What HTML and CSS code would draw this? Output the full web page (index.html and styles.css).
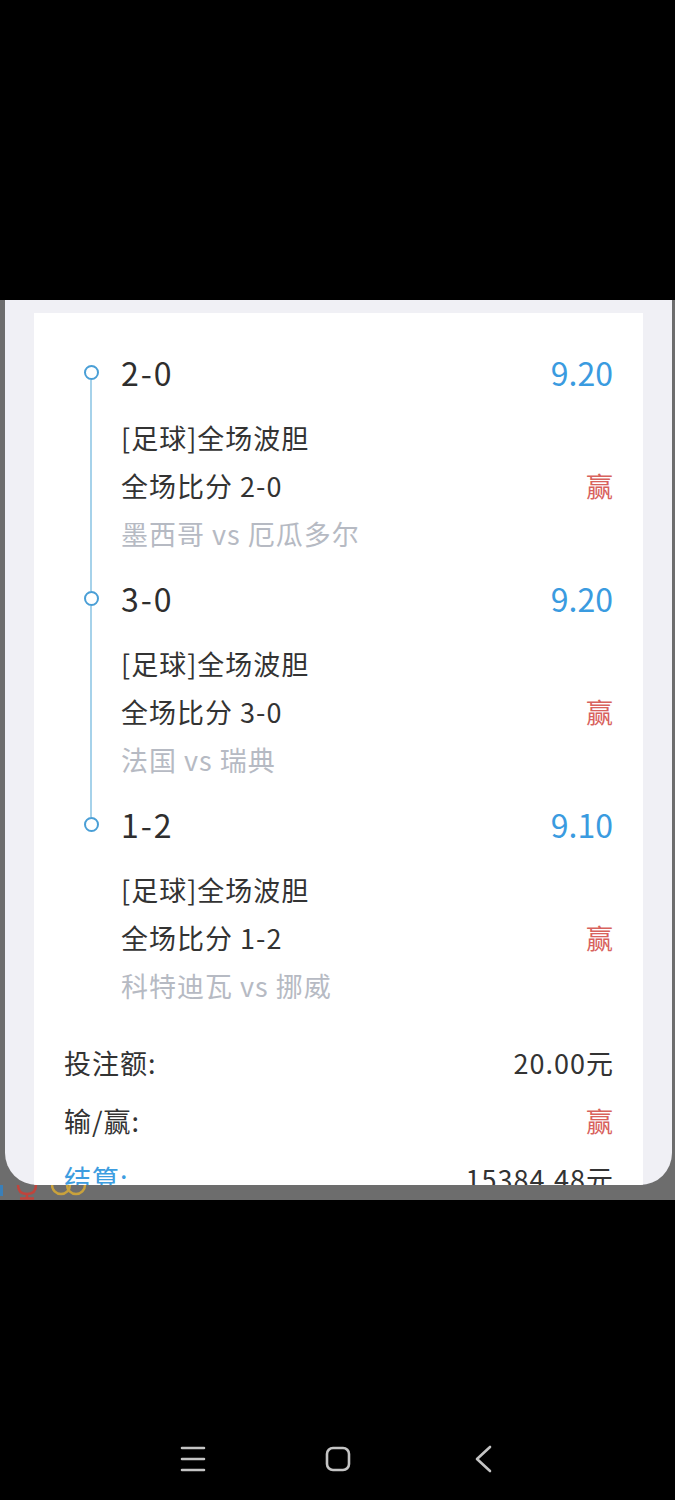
FILE: index.html
```html
<!DOCTYPE html>
<html lang="zh-CN">
<head>
    <meta charset="UTF-8">
    <meta name="viewport" content="width=device-width, initial-scale=1.0">
    <title>注单详情</title>
    <link rel="stylesheet" href="styles.css">
</head>
<body>

    <div class="top-black"></div>

    <div class="screen">
        <div class="modal">
            <div class="card">

                <div class="bet">
                    <div class="rail first">
                        <span class="seg-top"></span>
                        <span class="dot"></span>
                        <span class="seg-bot"></span>
                    </div>
                    <div class="bet-body">
                        <div class="bet-head">
                            <span class="score">2-0</span>
                            <span class="odds">9.20</span>
                        </div>
                        <div class="line">[足球]全场波胆</div>
                        <div class="line row">
                            <span>全场比分 2-0</span>
                            <span class="win end">赢</span>
                        </div>
                        <div class="line teams">墨西哥 vs 厄瓜多尔</div>
                    </div>
                </div>

                <div class="bet">
                    <div class="rail">
                        <span class="seg-top"></span>
                        <span class="dot"></span>
                        <span class="seg-bot"></span>
                    </div>
                    <div class="bet-body">
                        <div class="bet-head">
                            <span class="score">3-0</span>
                            <span class="odds">9.20</span>
                        </div>
                        <div class="line">[足球]全场波胆</div>
                        <div class="line row">
                            <span>全场比分 3-0</span>
                            <span class="win end">赢</span>
                        </div>
                        <div class="line teams">法国 vs 瑞典</div>
                    </div>
                </div>

                <div class="bet">
                    <div class="rail last">
                        <span class="seg-top"></span>
                        <span class="dot"></span>
                        <span class="seg-bot"></span>
                    </div>
                    <div class="bet-body">
                        <div class="bet-head">
                            <span class="score">1-2</span>
                            <span class="odds">9.10</span>
                        </div>
                        <div class="line">[足球]全场波胆</div>
                        <div class="line row">
                            <span>全场比分 1-2</span>
                            <span class="win end">赢</span>
                        </div>
                        <div class="line teams">科特迪瓦 vs 挪威</div>
                    </div>
                </div>

                <div class="summary">
                    <div class="sum-row">
                        <span>投注额:</span>
                        <span class="end">20.00元</span>
                    </div>
                    <div class="sum-row">
                        <span>输/赢:</span>
                        <span class="win end">赢</span>
                    </div>
                    <div class="sum-row">
                        <span class="blue">结算:</span>
                        <span class="end">15384.48元</span>
                    </div>
                </div>

            </div>
        </div>

        <div class="tabbar-peek">
            <span class="peek-blue"></span>
            <svg class="peek-mic" width="24" height="15" viewBox="0 0 24 15">
                <path d="M3 0 Q3 9 12 9 Q21 9 21 0" fill="none" stroke="#c0443c" stroke-width="2.5"/>
                <path d="M12 9 V13 M5 13.5 H19" stroke="#c0443c" stroke-width="2.5"/>
            </svg>
            <svg class="peek-coin" width="36" height="15" viewBox="0 0 36 15">
                <circle cx="10" cy="0" r="9" fill="none" stroke="#c9a23c" stroke-width="2.5"/>
                <circle cx="25" cy="0" r="9" fill="none" stroke="#c9a23c" stroke-width="2.5"/>
            </svg>
        </div>
    </div>

    <div class="navbar">
        <svg class="nav-icon" width="60" height="40" viewBox="0 0 60 40">
            <path d="M19 9 H41 M19 20 H41 M19 31 H41" stroke="#c4c4c4" stroke-width="2.6" stroke-linecap="round"/>
        </svg>
        <svg class="nav-icon" width="60" height="40" viewBox="0 0 60 40">
            <rect x="19" y="9" width="22" height="22" rx="6" fill="none" stroke="#c4c4c4" stroke-width="2.6"/>
        </svg>
        <svg class="nav-icon" width="60" height="40" viewBox="0 0 60 40">
            <path d="M37 8 L24 20 L37 32" fill="none" stroke="#c4c4c4" stroke-width="2.6" stroke-linecap="round" stroke-linejoin="round"/>
        </svg>
    </div>

</body>
</html>
```

FILE: styles.css
```css
body {
    margin: 0;
    background-color: #000;
    font-family: "Noto Sans CJK SC", "Noto Sans", sans-serif;
    color: #333;
}
.top-black {
    height: 300px;
}
.screen {
    height: 900px;
    background-color: #6d6d6d;
    display: flex;
    flex-direction: column;
    overflow: hidden;
}
.modal {
    height: 885px;
    margin: 0 3px 0 5px;
    padding: 13px 29px 0 29px;
    background-color: #f0f0f5;
    border-radius: 0 0 32px 32px;
    overflow: hidden;
    box-sizing: border-box;
}
.card {
    background-color: #fff;
    padding: 33px 30px 40px 30px;
}
.bet {
    display: flex;
}
.rail {
    width: 57px;
    flex-shrink: 0;
    display: flex;
    flex-direction: column;
    align-items: center;
    padding-right: 3px;
    box-sizing: border-box;
}
.seg-top {
    width: 2px;
    height: 19px;
    background-color: #a6d2ea;
}
.seg-bot {
    width: 2px;
    flex: 1;
    background-color: #a6d2ea;
}
.rail.first .seg-top,
.rail.last .seg-bot {
    background-color: transparent;
}
.dot {
    width: 15px;
    height: 15px;
    border: 2.5px solid #4a9fd6;
    border-radius: 50%;
    box-sizing: border-box;
    flex-shrink: 0;
}
.bet-body {
    flex: 1;
    padding-bottom: 14px;
}
.bet-head {
    display: flex;
    justify-content: space-between;
    align-items: center;
    height: 52px;
    margin-bottom: 16px;
}
.score {
    font-size: 32px;
    letter-spacing: 2px;
    color: #2e2e2e;
}
.odds {
    font-size: 32px;
    color: #3a9be0;
}
.line {
    font-size: 27px;
    letter-spacing: 1px;
    line-height: 48px;
    height: 48px;
}
.row {
    display: flex;
    justify-content: space-between;
}
.end {
    margin-right: -1px;
}
.teams {
    color: #b6bac3;
}
.win {
    color: #d8625d;
}
.summary {
    margin-top: 10px;
}
.sum-row {
    display: flex;
    justify-content: space-between;
    font-size: 27px;
    letter-spacing: 1px;
    line-height: 58px;
    height: 58px;
}
.blue {
    color: #3d9de0;
}
.tabbar-peek {
    height: 15px;
    display: flex;
    align-items: flex-start;
}
.peek-blue {
    width: 3px;
    height: 11px;
    background-color: #3a7fb8;
}
.peek-mic {
    margin-left: 12px;
}
.peek-coin {
    margin-left: 12px;
}
.navbar {
    height: 300px;
    display: flex;
    justify-content: center;
    align-items: flex-start;
    padding-top: 239px;
    gap: 85px;
    box-sizing: border-box;
}
```
